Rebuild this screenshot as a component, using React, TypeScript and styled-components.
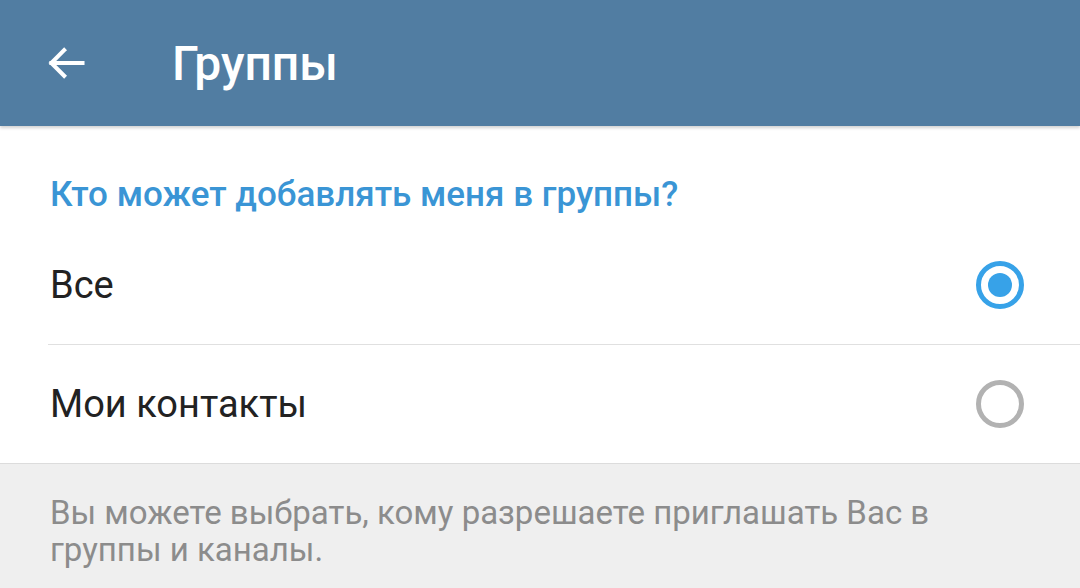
import styled, { createGlobalStyle } from 'styled-components'

const GlobalStyle = createGlobalStyle`
  html, body {
    margin: 0;
    padding: 0;
    background: #efefef;
    font-family: Roboto, 'Noto Sans', sans-serif;
  }
`

const options = [
  { label: 'Все', checked: true },
  { label: 'Мои контакты', checked: false },
]

const BackArrow = () => (
  <svg width="44" height="44" viewBox="0 0 24 24" fill="none">
    <path
      d="M21 12H4M11 5l-7 7 7 7"
      stroke="#fff"
      strokeWidth="2.2"
      strokeLinecap="square"
    />
  </svg>
)

const Radio = ({ checked }: { checked: boolean }) => (
  <S.Radio $checked={checked}>{checked && <S.RadioDot />}</S.Radio>
)

export default function App() {
  return (
    <>
      <GlobalStyle />
      <S.Page>
        <S.Header>
          <S.BackButton>
            <BackArrow />
          </S.BackButton>
          <S.Title>Группы</S.Title>
        </S.Header>

        <S.Section>
          <S.SectionTitle>Кто может добавлять меня в группы?</S.SectionTitle>
          {options.map((o, i) => (
            <S.Row key={o.label} $divider={i < options.length - 1}>
              <S.RowLabel>{o.label}</S.RowLabel>
              <Radio checked={o.checked} />
            </S.Row>
          ))}
        </S.Section>

        <S.Hint>
          Вы можете выбрать, кому разрешаете приглашать Вас в группы и каналы.
        </S.Hint>
      </S.Page>
    </>
  )
}

const S = {
  Page: styled.div`
    width: 1080px;
    height: 588px;
    overflow: hidden;
    background: #efefef;
  `,

  Header: styled.header`
    position: relative;
    z-index: 1;
    display: flex;
    align-items: center;
    height: 126px;
    padding-left: 44px;
    background: #517da2;
    box-shadow: 0 2px 3px rgba(0, 0, 0, 0.18);
  `,

  BackButton: styled.div`
    display: flex;
    width: 44px;
    height: 44px;
    margin-right: 84px;
  `,

  Title: styled.h1`
    margin: 0;
    color: #fff;
    font-size: 48px;
    font-weight: 500;
  `,

  Section: styled.section`
    background: #fff;
    padding-top: 42px;
    border-bottom: 1px solid #dcdcdc;
  `,

  SectionTitle: styled.div`
    padding: 0 50px;
    height: 58px;
    color: #3a95d5;
    font-size: 35px;
    font-weight: 500;
    line-height: 54px;
  `,

  Row: styled.div<{ $divider: boolean }>`
    display: flex;
    align-items: center;
    justify-content: space-between;
    height: 118px;
    margin-left: 48px;
    padding: 0 56px 0 2px;
    border-bottom: ${p => (p.$divider ? '1px solid #e0e0e0' : 'none')};
  `,

  RowLabel: styled.span`
    color: #222;
    font-size: 38px;
  `,

  Radio: styled.div<{ $checked: boolean }>`
    display: flex;
    align-items: center;
    justify-content: center;
    box-sizing: border-box;
    width: 48px;
    height: 48px;
    border-radius: 50%;
    border: 5px solid ${p => (p.$checked ? '#37a2e8' : '#b2b2b2')};
  `,

  RadioDot: styled.div`
    width: 24px;
    height: 24px;
    border-radius: 50%;
    background: #37a2e8;
  `,

  Hint: styled.p`
    margin: 0;
    padding: 30px 120px 0 50px;
    color: #8c8c8c;
    font-size: 33px;
    line-height: 37px;
  `,
}
